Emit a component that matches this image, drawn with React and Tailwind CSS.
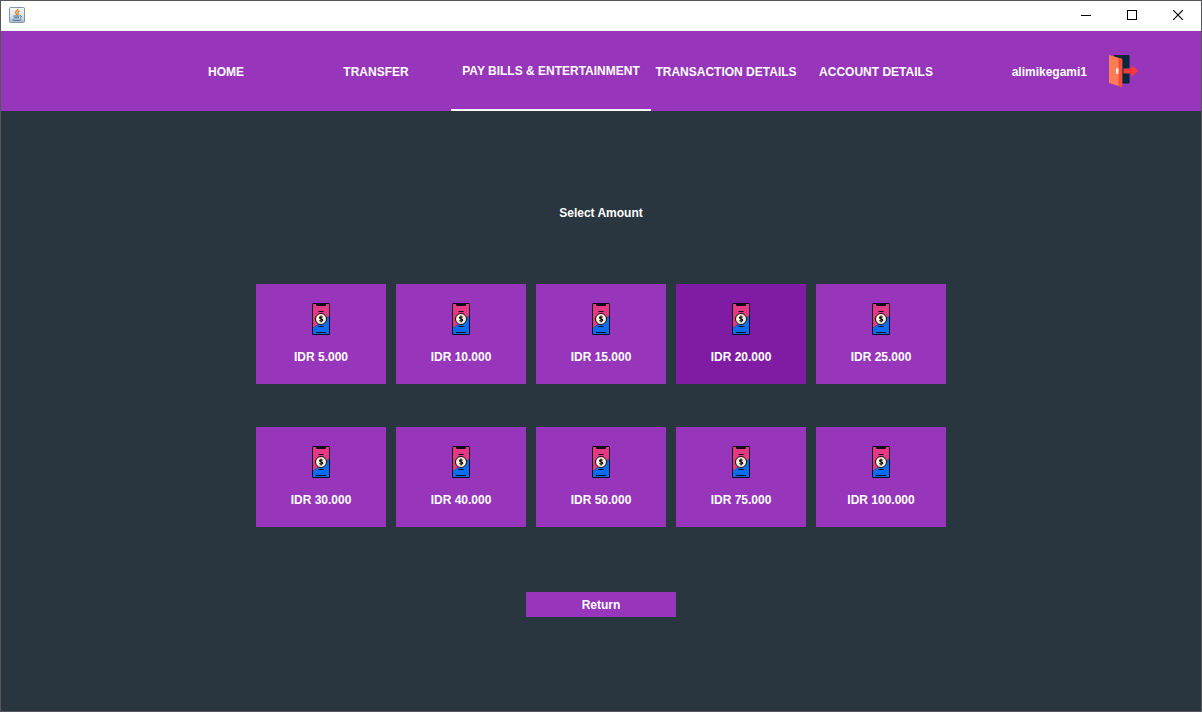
import React from 'react';

const NAV_ITEMS = [
  { label: 'HOME', width: 'w-[150px]' },
  { label: 'TRANSFER', width: 'w-[150px]' },
  { label: 'PAY BILLS & ENTERTAINMENT', width: 'w-[200px]', active: true },
  { label: 'TRANSACTION DETAILS', width: 'w-[150px]' },
  { label: 'ACCOUNT DETAILS', width: 'w-[150px]' },
];

const AMOUNTS = [
  '5.000', '10.000', '15.000', '20.000', '25.000',
  '30.000', '40.000', '50.000', '75.000', '100.000',
];

const HIGHLIGHTED = '20.000';

function JavaIcon() {
  return (
    <svg width="16" height="16" viewBox="0 0 16 16" fill="none" aria-hidden="true">
      <defs>
        <linearGradient id="java-bg" x1="0" y1="0" x2="0" y2="1">
          <stop offset="0" stopColor="#f4f7fa" />
          <stop offset="0.5" stopColor="#dfe7ee" />
          <stop offset="1" stopColor="#a9bccd" />
        </linearGradient>
      </defs>
      <rect x="0.5" y="0.5" width="15" height="15" rx="1" fill="url(#java-bg)" stroke="#8096aa" />
      <path d="M8.800 1.800c.7 1.500-2.600 2.400-2.200 3.900.2.800 1.100 1.300 1.200 2.400M10.600 3.800c-1.700.8-2.200 1.500-1.500 2.400.4.600.1 1.200-.5 1.700" stroke="#e57c14" strokeWidth="1.300" />
      <path d="M4.300 9h6.200M5 10.800h5M11 8.800c2-.4 1.900 1.600-.3 2.200M3.500 12.800c2.400.8 6.600.8 8.800 0" stroke="#3f688e" strokeWidth="1" />
    </svg>
  );
}

function PhoneIcon() {
  return (
    <svg width="18" height="32" viewBox="0 0 18 32" fill="none" aria-hidden="true">
      <rect width="18" height="32" rx="1.5" fill="#0b0b1c" />
      <path d="M1 1h16v12L1 25z" fill="#e83883" />
      <path d="M17 13v18H1v-6z" fill="#0b6cf2" />
      <path d="M4 1h10v1.200l-1 .8H5l-1-.8z" fill="#0b0b1c" />
      <path d="M6.500 8.500h5M6.500 23.500h5M4 29.500h10" stroke="#0b0b1c" />
      <circle cx="9" cy="16" r="5.500" fill="#fff1d6" stroke="#0b0b1c" />
      <path d="M10.700 14.400c-.3-.7-3.200-.9-3.200.3 0 1.400 3.300.9 3.300 2.500 0 1.300-3.100 1.200-3.500.2M9 12.500v7" stroke="#0b0b1c" strokeWidth="1.100" />
    </svg>
  );
}

function ExitIcon() {
  return (
    <svg width="32" height="32" viewBox="0 0 32 32" aria-hidden="true">
      <path d="M6 0h14.500q1 0 1 1v26.500q0 1-1 1H8z" fill="#07283a" />
      <path d="M15.500 13.500h8v-3.300l7 5.800-7 5.800v-3.300h-8z" fill="#f83a3a" />
      <path d="M1 0l12.200 3.500q1 .3 1 1.300V32L1 28z" fill="#fe7d54" />
      <path d="M10.500 2.700l2.700.8q1 .3 1 1.300V32l-3.700-1.100z" fill="#fd4a3c" />
      <rect x="8" y="13" width="2.500" height="6" rx="1.200" fill="#fff0dd" />
    </svg>
  );
}

function TitleBar() {
  return (
    <header className="flex h-[30px] items-center justify-between bg-white pb-0.5 pl-2 text-black">
      <JavaIcon />
      <div className="flex h-full">
        <button type="button" aria-label="Minimize" className="flex w-[46px] items-center justify-center">
          <svg width="10" height="10" viewBox="0 0 10 10" stroke="currentColor"><path d="M0 5.500h10" /></svg>
        </button>
        <button type="button" aria-label="Maximize" className="flex w-[46px] items-center justify-center">
          <svg width="10" height="10" viewBox="0 0 10 10" fill="none" stroke="currentColor"><rect x="0.5" y="0.5" width="9" height="9" /></svg>
        </button>
        <button type="button" aria-label="Close" className="flex w-[46px] items-center justify-center">
          <svg width="10" height="10" viewBox="0 0 10 10" stroke="currentColor" strokeWidth="1.200"><path d="M0 0l10 10M10 0L0 10" /></svg>
        </button>
      </div>
    </header>
  );
}

function NavBar() {
  return (
    <div className="flex h-20 justify-between bg-[#9735bb] pr-[61px] pl-[150px]">
      <nav className="flex">
        {NAV_ITEMS.map(({ label, width, active }) => (
          <a
            key={label}
            href="#"
            aria-current={active ? 'page' : undefined}
            className={`${width} flex items-center justify-center whitespace-nowrap pt-0.5 ${active ? 'border-b-2 border-white' : ''}`}
          >
            {label}
          </a>
        ))}
      </nav>
      <div className="flex items-center gap-[21px]">
        <span className="pt-0.5">alimikegami1</span>
        <button type="button" aria-label="Log out">
          <ExitIcon />
        </button>
      </div>
    </div>
  );
}

export default function App() {
  return (
    <div className="flex min-h-screen flex-col border border-[#55575a] bg-[#2a363f] font-['Liberation_Sans',Arial,sans-serif] text-xs font-bold text-white">
      <TitleBar />
      <NavBar />
      <main className="flex flex-1 flex-col items-center pt-[94px] pb-10">
        <h1>Select Amount</h1>
        <div className="mt-[63px] grid grid-cols-5 gap-x-2.5 gap-y-[43px]">
          {AMOUNTS.map((amount) => (
            <button
              key={amount}
              type="button"
              className={`flex h-[100px] w-[130px] flex-col items-center justify-center gap-3.5 ${amount === HIGHLIGHTED ? 'bg-[#7f1ca3]' : 'bg-[#9735bb]'}`}
            >
              <PhoneIcon />
              <span>IDR {amount}</span>
            </button>
          ))}
        </div>
        <button type="button" className="mt-[65px] h-[25px] w-[150px] bg-[#9735bb]">
          Return
        </button>
      </main>
    </div>
  );
}
